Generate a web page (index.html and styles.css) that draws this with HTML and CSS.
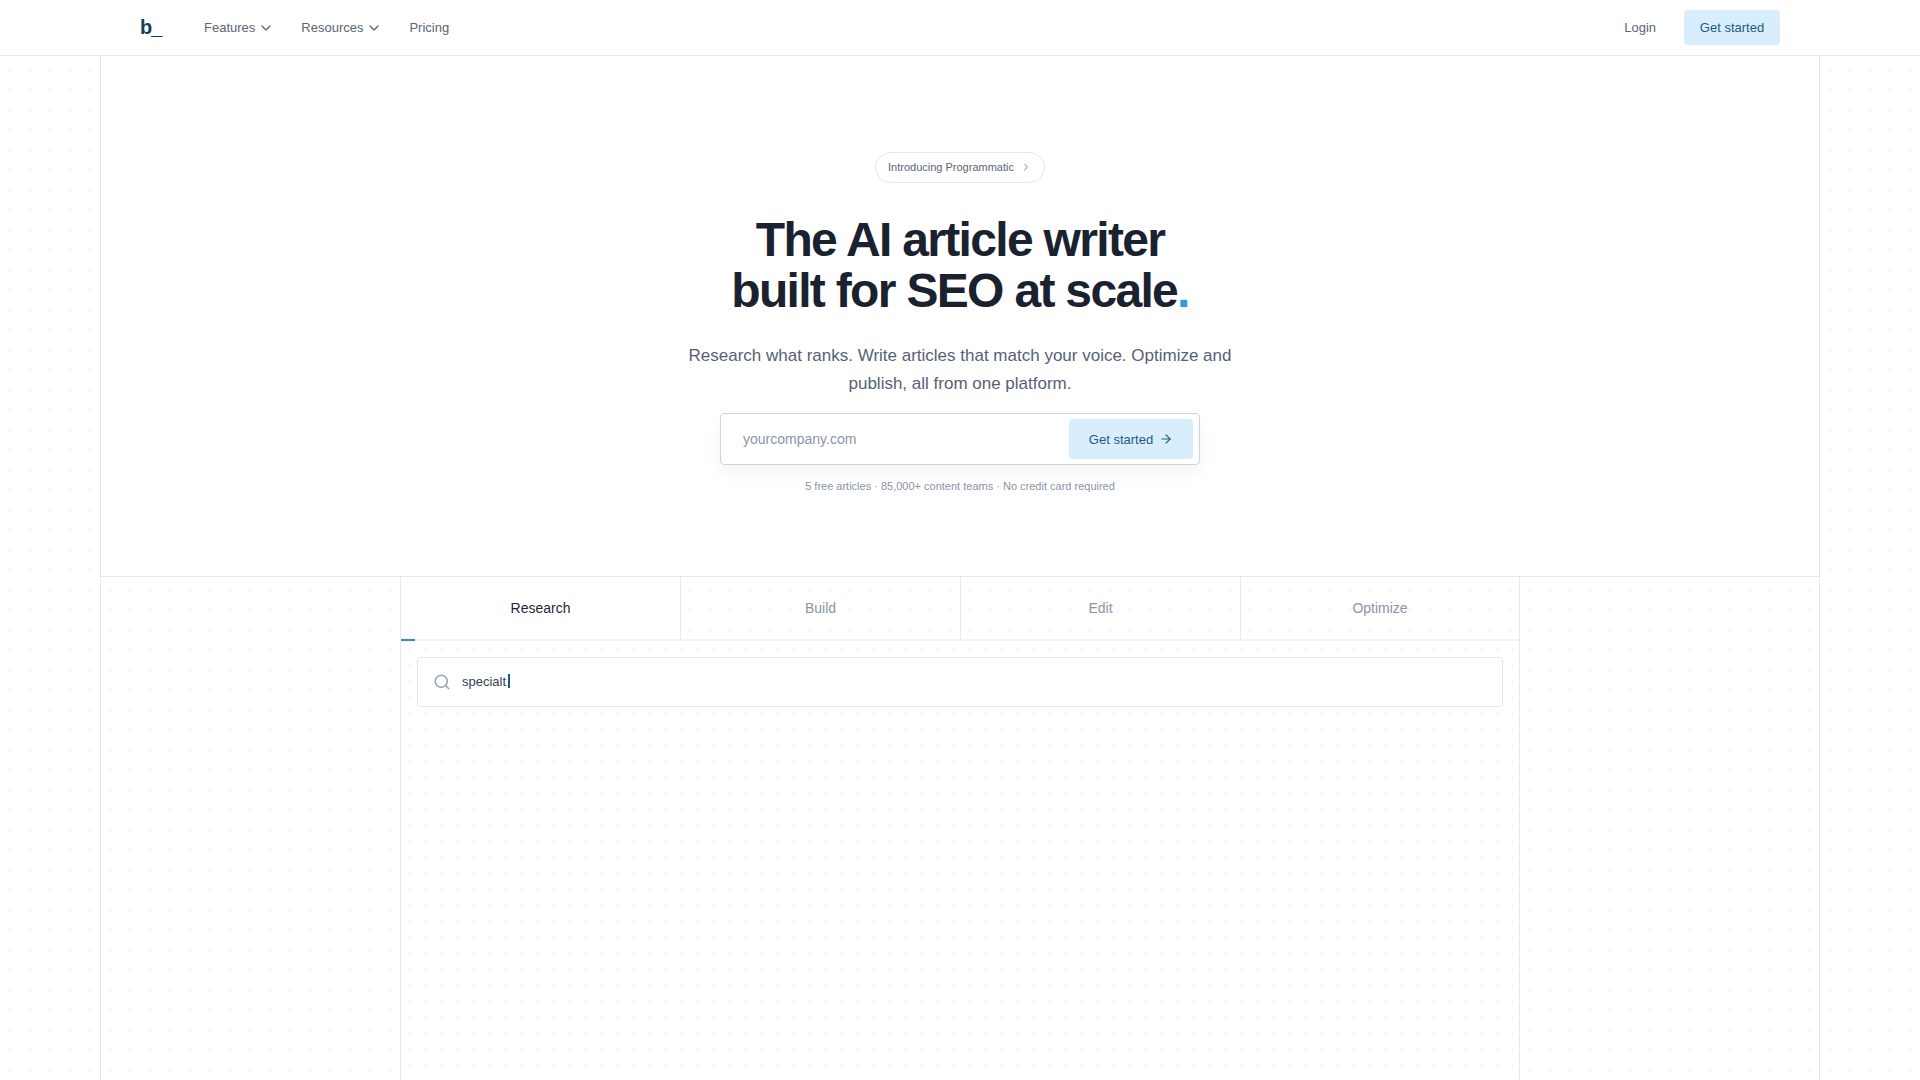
FILE: index.html
```html
<!DOCTYPE html>
<html>
<head>
  <title>b_ - The AI article writer</title>
  <link rel="stylesheet" href="styles.css">
</head>
<body>
  <header class="nav">
    <div class="nav-left">
      <a class="logo">b_</a>
      <a class="nav-link">Features
        <svg class="chevron" viewBox="0 0 24 24"><path d="m6 9 6 6 6-6"/></svg>
      </a>
      <a class="nav-link">Resources
        <svg class="chevron" viewBox="0 0 24 24"><path d="m6 9 6 6 6-6"/></svg>
      </a>
      <a class="nav-link">Pricing</a>
    </div>
    <div class="nav-right">
      <a class="nav-link">Login</a>
      <a class="btn-nav">Get started</a>
    </div>
  </header>

  <div class="page">
    <section class="hero">
      <a class="badge">Introducing Programmatic
        <svg class="badge-icon" viewBox="0 0 24 24"><path d="m9 18 6-6-6-6"/></svg>
      </a>
      <h1>The AI article writer<br>built for SEO at scale<span class="dot">.</span></h1>
      <p class="lead">Research what ranks. Write articles that match your voice. Optimize and publish, all from one platform.</p>
      <form class="signup">
        <span class="placeholder">yourcompany.com</span>
        <a class="btn-signup">Get started
          <svg class="arrow" viewBox="0 0 24 24"><path d="M5 12h14"/><path d="m12 5 7 7-7 7"/></svg>
        </a>
      </form>
      <p class="note">5 free articles · 85,000+ content teams · No credit card required</p>
    </section>

    <section class="demo">
      <div class="tabs">
        <div class="tab active">Research<span class="progress"></span></div>
        <div class="tab">Build</div>
        <div class="tab">Edit</div>
        <div class="tab">Optimize</div>
      </div>
      <div class="demo-body">
        <div class="search">
          <svg class="search-icon" viewBox="0 0 24 24"><circle cx="11" cy="11" r="8"/><path d="m21 21-4.3-4.3"/></svg>
          <span class="search-text">specialt</span><span class="caret"></span>
        </div>
      </div>
    </section>
  </div>
</body>
</html>
```

FILE: styles.css
```css
* {
  box-sizing: border-box;
}

html,
body {
  height: 100%;
}

body {
  margin: 0;
  display: flex;
  flex-direction: column;
  overflow: hidden;
  font-family: "Liberation Sans", Arial, sans-serif;
  background-color: #ffffff;
  background-image: radial-gradient(circle, #f0f1f4 1px, transparent 1px);
  background-size: 20px 20px;
}

svg {
  fill: none;
  stroke: currentColor;
  stroke-width: 2;
  stroke-linecap: round;
  stroke-linejoin: round;
}

/* top bar */
.nav {
  height: 56px;
  flex-shrink: 0;
  padding: 0 140px;
  display: flex;
  align-items: center;
  justify-content: space-between;
  background-color: #ffffff;
  border-bottom: 1px solid #e5e7eb;
}

.nav-left,
.nav-right {
  display: flex;
  align-items: center;
}

.logo {
  width: 64px;
  font-size: 20px;
  font-weight: 700;
  letter-spacing: -1px;
  color: #153e5c;
}

.nav-left .nav-link {
  margin-right: 29px;
}

.nav-left .nav-link:has(.chevron) {
  margin-right: 27px;
}

.nav-right .nav-link {
  margin-right: 28px;
}

.nav-link {
  display: flex;
  align-items: center;
  gap: 3px;
  font-size: 13px;
  color: #5b6675;
}

.chevron {
  width: 16px;
  height: 16px;
}

.btn-nav {
  width: 96px;
  height: 35px;
  display: flex;
  align-items: center;
  justify-content: center;
  font-size: 13px;
  color: #1d5a87;
  background-color: #d9eefc;
  border-radius: 4px;
}

/* hero */
.page {
  width: 1720px;
  flex: 1;
  min-height: 0;
  margin: 0 auto;
  display: flex;
  flex-direction: column;
  border-left: 1px solid #e5e7eb;
  border-right: 1px solid #e5e7eb;
}

.hero {
  height: 521px;
  flex-shrink: 0;
  padding-top: 96px;
  display: flex;
  flex-direction: column;
  align-items: center;
  background-color: #ffffff;
  border-bottom: 1px solid #e2e8f0;
}

.badge {
  height: 31px;
  padding: 0 12px 2px;
  display: flex;
  align-items: center;
  gap: 6px;
  font-size: 11px;
  color: #5b6675;
  border: 1px solid #e2e8f0;
  border-radius: 16px;
}

.badge-icon {
  width: 12px;
  height: 12px;
  color: #7a8698;
}

h1 {
  margin: 32px 0 0;
  font-size: 48px;
  line-height: 50.5px;
  font-weight: 700;
  letter-spacing: -0.035em;
  text-align: center;
  color: #1a2230;
}

.dot {
  color: #2d9cdb;
}

.lead {
  width: 560px;
  margin: 26px 0 0;
  font-size: 17px;
  line-height: 28px;
  text-align: center;
  color: #566273;
}

.signup {
  width: 480px;
  height: 52px;
  margin-top: 15px;
  padding: 5px 6px 5px 22px;
  display: flex;
  align-items: center;
  justify-content: space-between;
  background-color: #ffffff;
  border: 1px solid #cbd5e1;
  border-radius: 4px;
  box-shadow: 0 8px 20px rgba(15, 23, 42, 0.05);
}

.placeholder {
  font-size: 14px;
  color: #8a96a8;
}

.btn-signup {
  width: 124px;
  height: 40px;
  display: flex;
  align-items: center;
  justify-content: center;
  gap: 6px;
  font-size: 13px;
  color: #1d5a87;
  background-color: #d9eefc;
  border-radius: 4px;
}

.arrow {
  width: 14px;
  height: 14px;
}

.note {
  margin: 15px 0 0;
  font-size: 11px;
  color: #8a94a6;
}

/* tabs and demo */
.demo {
  width: 1120px;
  flex: 1;
  margin: 0 auto;
  display: flex;
  flex-direction: column;
  border-left: 1px solid #e2e8f0;
  border-right: 1px solid #e2e8f0;
}

.tabs {
  height: 64px;
  flex-shrink: 0;
  display: grid;
  grid-template-columns: 279px 280px 280px 1fr;
  border-bottom: 2px solid #f1f5f9;
}

.tab {
  position: relative;
  display: flex;
  align-items: center;
  justify-content: center;
  font-size: 14px;
  color: #8a94a6;
  border-left: 1px solid #e2e8f0;
}

.tab:first-child {
  border-left: none;
}

.tab.active {
  color: #1f2937;
  background-color: #ffffff;
}

.progress {
  position: absolute;
  left: 0;
  bottom: -2px;
  width: 14px;
  height: 2px;
  background-color: #3a8dbd;
}

.demo-body {
  flex: 1;
  padding: 16px;
  background-color: #ffffff;
  background-image: radial-gradient(circle, #f2f3f6 1px, transparent 1px);
  background-size: 16px 16px;
}

.search {
  height: 50px;
  padding: 0 15px;
  display: flex;
  align-items: center;
  background-color: #ffffff;
  border: 1px solid #e2e8f0;
  border-radius: 4px;
}

.search-icon {
  width: 18px;
  height: 18px;
  margin-right: 11px;
  color: #94a3b8;
}

.search-text {
  margin-bottom: 2px;
  font-size: 13px;
  color: #374151;
}

.caret {
  width: 2px;
  height: 14px;
  margin-left: 2px;
  margin-bottom: 2px;
  background-color: #1d5a87;
}
```
